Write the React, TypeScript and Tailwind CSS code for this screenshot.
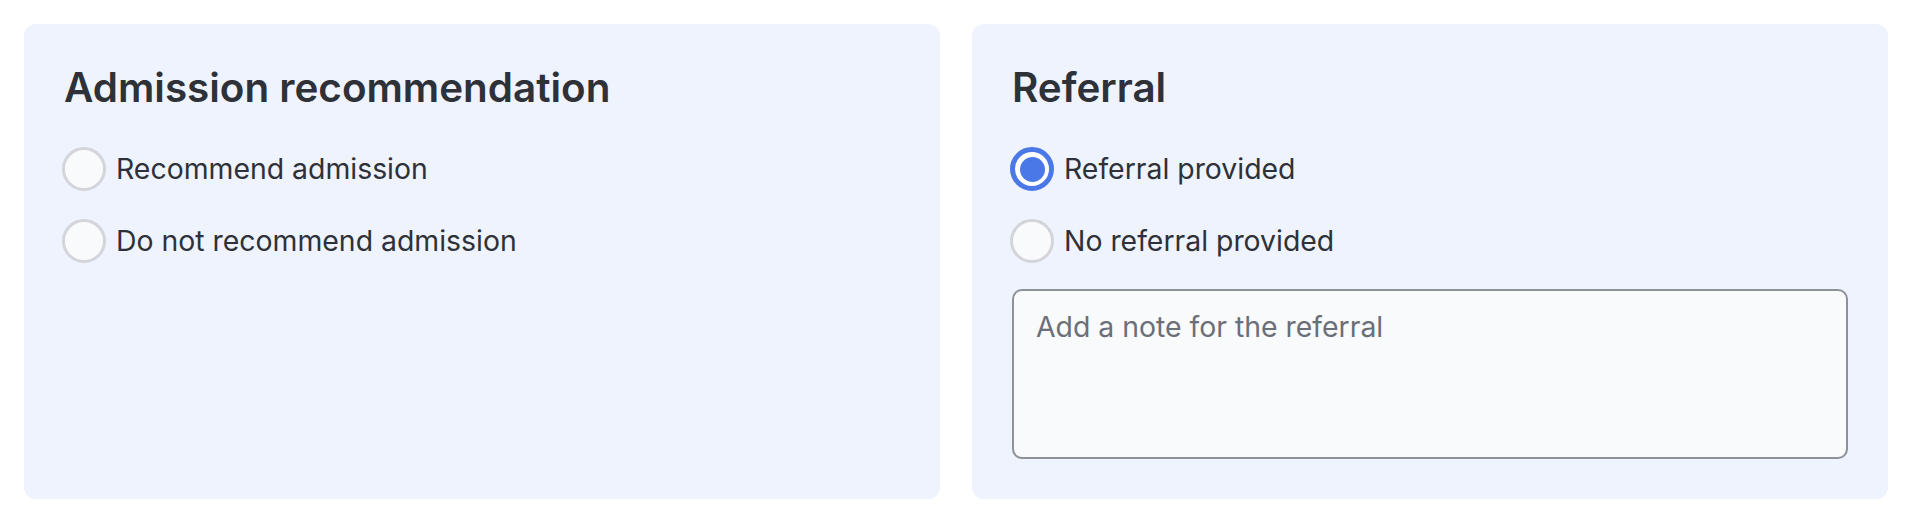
import { useState } from 'react';

function Radio({ label, checked, onChange }: { label: string; checked: boolean; onChange: () => void }) {
  return (
    <label className="flex items-center h-12 gap-[10px] cursor-pointer" onClick={onChange}>
      <span
        className={
          checked
            ? 'ml-[-2px] flex items-center justify-center w-[44px] h-[44px] rounded-full border-[5px] border-[#4a78e6] bg-white shrink-0'
            : 'ml-[-2px] w-[44px] h-[44px] rounded-full border-[3px] border-[#d3d5da] bg-[#f9fafc] shrink-0'
        }
      >
        {checked && <span className="w-[25px] h-[25px] rounded-full bg-[#4a78e6]" />}
      </span>
      <span className="text-[28.4px] text-[#2e3137]">{label}</span>
    </label>
  );
}

export default function App() {
  const [admission, setAdmission] = useState<string | null>(null);
  const [referral, setReferral] = useState<string | null>('provided');

  return (
    <div className="p-6 bg-white font-['Inter',sans-serif]">
      <div className="grid grid-cols-2 gap-8">
        <div className="bg-[#eef3fe] rounded-xl p-10">
          <h2 className="text-[40.4px] leading-[48px] font-semibold text-[#2e3137] mb-[33px]">Admission recommendation</h2>
          <div className="flex flex-col gap-6">
            <Radio label="Recommend admission" checked={admission === 'yes'} onChange={() => setAdmission('yes')} />
            <Radio label="Do not recommend admission" checked={admission === 'no'} onChange={() => setAdmission('no')} />
          </div>
        </div>
        <div className="bg-[#eef3fe] rounded-xl p-10">
          <h2 className="text-[40.4px] leading-[48px] font-semibold text-[#2e3137] mb-[33px]">Referral</h2>
          <div className="flex flex-col gap-6">
            <Radio label="Referral provided" checked={referral === 'provided'} onChange={() => setReferral('provided')} />
            <Radio label="No referral provided" checked={referral === 'none'} onChange={() => setReferral('none')} />
            <textarea
              placeholder="Add a note for the referral"
              className="block w-full h-[170px] resize-none rounded-[10px] border-2 border-[#8e9197] bg-[#f9fafc] px-[22px] py-[15px] text-[28.4px] leading-[1.5] text-[#2e3137] placeholder:text-[#6b6f78] outline-none"
            />
          </div>
        </div>
      </div>
    </div>
  );
}
